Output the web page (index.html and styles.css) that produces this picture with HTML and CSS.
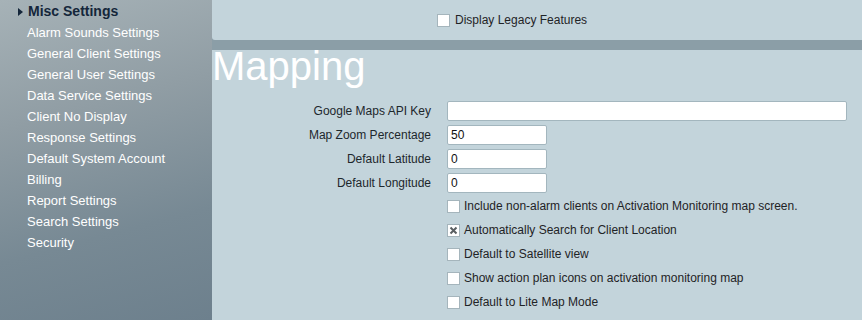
FILE: index.html
```
<!DOCTYPE html>
<html lang="en">
<head>
    <meta charset="UTF-8">
    <meta name="viewport" content="width=device-width, initial-scale=1.0">
    <title>Misc Settings</title>
    <link rel="stylesheet" href="styles.css">
</head>
<body>
    <div class="sidebar">
        <ul class="menu">
            <li class="active">
                <svg class="arrow" width="5" height="8" viewBox="0 0 5 8"><path d="M0 0 L5 4 L0 8 Z" fill="#14263a"/></svg>Misc Settings
            </li>
            <li>Alarm Sounds Settings</li>
            <li>General Client Settings</li>
            <li>General User Settings</li>
            <li>Data Service Settings</li>
            <li>Client No Display</li>
            <li>Response Settings</li>
            <li>Default System Account</li>
            <li>Billing</li>
            <li>Report Settings</li>
            <li>Search Settings</li>
            <li>Security</li>
        </ul>
    </div>

    <div class="main">
        <div class="top-panel">
            <label class="check-row">
                <span class="box"></span>Display Legacy Features
            </label>
        </div>

        <div class="content">
            <h1 class="title">Mapping</h1>

            <div class="form-grid">
                <label class="field-label">Google Maps API Key</label>
                <input type="text" class="field wide" value="">
                <label class="field-label">Map Zoom Percentage</label>
                <input type="text" class="field" value="50">
                <label class="field-label">Default Latitude</label>
                <input type="text" class="field" value="0">
                <label class="field-label">Default Longitude</label>
                <input type="text" class="field" value="0">
            </div>

            <div class="options">
                <label class="check-row"><span class="box"></span>Include non-alarm clients on Activation Monitoring map screen.</label>
                <label class="check-row">
                    <span class="box">
                        <svg width="11" height="11" viewBox="0 0 11 11"><path d="M2.5 2.5 L8.5 8.5 M8.5 2.5 L2.5 8.5" stroke="#5a5f62" stroke-width="2"/></svg>
                    </span>Automatically Search for Client Location
                </label>
                <label class="check-row"><span class="box"></span>Default to Satellite view</label>
                <label class="check-row"><span class="box"></span>Show action plan icons on activation monitoring map</label>
                <label class="check-row"><span class="box"></span>Default to Lite Map Mode</label>
            </div>
        </div>
    </div>
</body>
</html>
```

FILE: styles.css
```
body {
    margin: 0;
    padding: 0;
    font-family: "Liberation Sans", Arial, sans-serif;
    display: flex;
    height: 320px;
    overflow: hidden;
}
.sidebar {
    width: 212px;
    flex-shrink: 0;
    height: 320px;
    background: linear-gradient(165deg, #a6b2b7 0%, #909da4 35%, #778994 70%, #6d808d 100%);
}
.menu {
    list-style: none;
    margin: 0;
    padding: 1px 0 0 27px;
}
.menu li {
    color: white;
    font-size: 13px;
    line-height: 21px;
}
.menu li.active {
    color: #14263a;
    font-weight: bold;
    font-size: 14px;
}
.arrow {
    margin-left: -9px;
    margin-right: 5px;
    vertical-align: 0;
}
.main {
    flex: 1;
    display: flex;
    flex-direction: column;
    background-color: #8b9ea7;
}
.top-panel {
    height: 40px;
    background-color: #c3d4db;
    border-bottom-left-radius: 3px;
    display: flex;
    align-items: center;
    padding-left: 225px;
    margin-bottom: 10px;
}
.content {
    flex: 1;
    background-color: #c3d4db;
}
.title {
    margin: 0;
    font-size: 40px;
    font-weight: normal;
    line-height: 32px;
    color: white;
}
.form-grid {
    display: grid;
    grid-template-columns: 219px auto;
    column-gap: 16px;
    row-gap: 4px;
    align-items: center;
    margin-top: 19px;
}
.field-label {
    text-align: right;
    font-size: 12px;
    color: #1d272c;
}
.field {
    box-sizing: border-box;
    width: 100px;
    height: 20px;
    border: 1px solid #a3b6be;
    border-radius: 2px;
    background: white;
    font-family: "Liberation Sans", Arial, sans-serif;
    font-size: 12px;
    padding: 0 3px;
    color: #111;
}
.field.wide {
    width: 400px;
}
.options {
    margin-top: 1px;
    padding-left: 235px;
}
.check-row {
    display: flex;
    align-items: center;
    height: 24px;
    font-size: 12px;
    color: #1f2326;
}
.box {
    box-sizing: border-box;
    width: 13px;
    height: 13px;
    border: 1px solid #a5b5bc;
    background: white;
    margin-right: 4px;
    display: flex;
    align-items: center;
    justify-content: center;
}
.top-panel .check-row {
    height: auto;
}
.top-panel .box {
    margin-right: 5px;
}
```
